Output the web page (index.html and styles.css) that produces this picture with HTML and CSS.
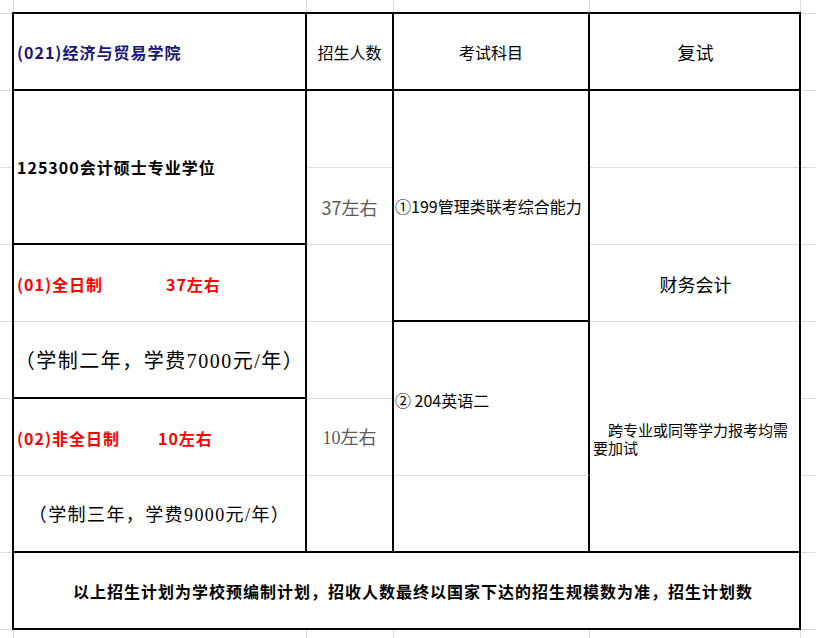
FILE: index.html
```html
<!DOCTYPE html>
<html lang="zh-CN">
<head>
<meta charset="utf-8">
<title>招生计划</title>
<link rel="stylesheet" href="styles.css">
</head>
<body>
<div class="sheet">
  <div class="plan">
    <div class="cell h-college bold navy">(021)经济与贸易学院</div>
    <div class="cell h-quota center">招生人数</div>
    <div class="cell h-subject center">考试科目</div>
    <div class="cell h-retest center">复试</div>

    <div class="cell major bold">125300会计硕士专业学位</div>
    <div class="cell ft-mode bold red">(01)全日制<span class="gap-wide">37左右</span></div>
    <div class="cell ft-fee center fee-big">（学制二年，学费7000元/年）</div>
    <div class="cell pt-mode bold red">(02)非全日制<span class="gap-narrow">10左右</span></div>
    <div class="cell pt-fee center fee-small">（学制三年，学费9000元/年）</div>

    <div class="cell quota-ft center quota">37左右</div>
    <div class="cell quota-pt center quota serif">10左右</div>

    <div class="cell subj-1">①199管理类联考综合能力</div>
    <div class="cell subj-2">②&nbsp;204英语二</div>
    <div class="cell subj-blank"></div>

    <div class="cell retest-r2"></div>
    <div class="cell retest-r3"></div>
    <div class="cell retest-main center">财务会计</div>
    <div class="cell retest-note">　跨专业或同等学力报考均需要加试</div>

    <div class="cell note bold">以上招生计划为学校预编制计划，招收人数最终以国家下达的招生规模数为准，招生计划数</div>
  </div>
</div>
</body>
</html>
```

FILE: styles.css
```css
html, body {
  margin: 0;
  padding: 0;
  background: #ffffff;
}

body {
  font-family: "Noto Sans CJK SC", "Liberation Sans", sans-serif;
  color: #000000;
  text-spacing-trim: space-all;
}

/* spreadsheet canvas with light gridlines */
.sheet {
  width: 816px;
  height: 638px;
  overflow: hidden;
  background-color: #ffffff;
  background-repeat: no-repeat;
  background-image:
    linear-gradient(#dcdcdc, #dcdcdc),
    linear-gradient(#dcdcdc, #dcdcdc),
    linear-gradient(#dcdcdc, #dcdcdc),
    linear-gradient(#dcdcdc, #dcdcdc),
    linear-gradient(#dcdcdc, #dcdcdc),
    linear-gradient(#dcdcdc, #dcdcdc),
    linear-gradient(#dcdcdc, #dcdcdc),
    linear-gradient(#dcdcdc, #dcdcdc),
    linear-gradient(#dcdcdc, #dcdcdc),
    linear-gradient(#dcdcdc, #dcdcdc),
    linear-gradient(#dcdcdc, #dcdcdc),
    linear-gradient(#dcdcdc, #dcdcdc),
    linear-gradient(#dcdcdc, #dcdcdc),
    linear-gradient(#dcdcdc, #dcdcdc);
  background-size:
    1px 100%, 1px 100%, 1px 100%, 1px 100%, 1px 100%,
    100% 1px, 100% 1px, 100% 1px, 100% 1px, 100% 1px,
    100% 1px, 100% 1px, 100% 1px, 100% 1px;
  background-position:
    13px 0, 306px 0, 393px 0, 589px 0, 800px 0,
    0 13px, 0 90px, 0 167px, 0 244px, 0 321px,
    0 398px, 0 475px, 0 552px, 0 629px;
  padding: 12px 0 0 12px;
  box-sizing: border-box;
}

.plan {
  display: grid;
  grid-template-columns: 293px 87px 196px 211px;
  grid-template-rows: repeat(8, 77px);
  width: max-content;
  border-left: 2px solid #000;
  border-top: 2px solid #000;
}

.cell {
  box-sizing: border-box;
  display: flex;
  align-items: center;
  border-right: 2px solid #000;
  font-size: 16px;
  line-height: 20px;
  white-space: nowrap;
  min-width: 0;
}

.center { justify-content: center; }
.bold { font-weight: 700; letter-spacing: 1px; }
.navy { color: #16167c; }
.red { color: #ff0000; }
.serif { font-family: "Liberation Serif", "Noto Sans CJK SC", serif; }

/* header row */
.h-college { grid-column: 1; grid-row: 1; padding-left: 3px; border-bottom: 2px solid #000; }
.h-quota { grid-column: 2; grid-row: 1; border-bottom: 2px solid #000; }
.h-subject { grid-column: 3; grid-row: 1; border-bottom: 2px solid #000; }
.h-retest { grid-column: 4; grid-row: 1; border-bottom: 2px solid #000; font-size: 18px; padding-left: 2px; }

/* first column */
.major {
  grid-column: 1; grid-row: 2 / 4;
  background: #fff;
  padding-left: 3px;
  border-bottom: 2px solid #000;
}
.ft-mode { grid-column: 1; grid-row: 4; padding-left: 3px; }
.pt-mode { grid-column: 1; grid-row: 6; padding-left: 3px; }
.gap-wide { margin-left: 63px; }
.gap-narrow { margin-left: 38px; }

.ft-fee { grid-column: 1; grid-row: 5; border-bottom: 2px solid #000; }
.pt-fee { grid-column: 1; grid-row: 7; border-bottom: 2px solid #000; }
.fee-big {
  font-size: 20px;
  letter-spacing: 1.5px;
  font-family: "Liberation Serif", "Noto Sans CJK SC", serif;
  padding-top: 2px;
}
.fee-small {
  font-size: 18px;
  letter-spacing: 1.4px;
  font-family: "Liberation Serif", "Noto Sans CJK SC", serif;
  padding-top: 2px;
}

/* quota column */
.quota { font-size: 18px; color: #5a5a5a; }
.quota-ft { grid-column: 2; grid-row: 2 / 5; }
.quota-pt { grid-column: 2; grid-row: 5 / 8; border-bottom: 2px solid #000; padding-top: 2px; }

/* subject column */
.subj-1 {
  grid-column: 3; grid-row: 2 / 5;
  background: #fff;
  padding-left: 1px;
  border-bottom: 2px solid #000;
}
.subj-2 {
  grid-column: 3; grid-row: 5 / 7;
  background: #fff;
  padding-left: 1px;
  padding-top: 2px;
  border-bottom: 1px solid #dcdcdc;
}
.subj-blank { grid-column: 3; grid-row: 7; border-bottom: 2px solid #000; }

/* retest column */
.retest-r2 { grid-column: 4; grid-row: 2; }
.retest-r3 { grid-column: 4; grid-row: 3; }
.retest-main { grid-column: 4; grid-row: 4; font-size: 18px; padding-left: 2px; }
.retest-note {
  grid-column: 4; grid-row: 5 / 8;
  background: #fff;
  border-bottom: 2px solid #000;
  white-space: normal;
  font-size: 15px;
  line-height: 18px;
  padding: 4px 4px 0 3px;
}

/* footer note */
.note {
  grid-column: 1 / 5; grid-row: 8;
  background: #fff;
  border-bottom: 2px solid #000;
  padding-left: 59px;
}
```
